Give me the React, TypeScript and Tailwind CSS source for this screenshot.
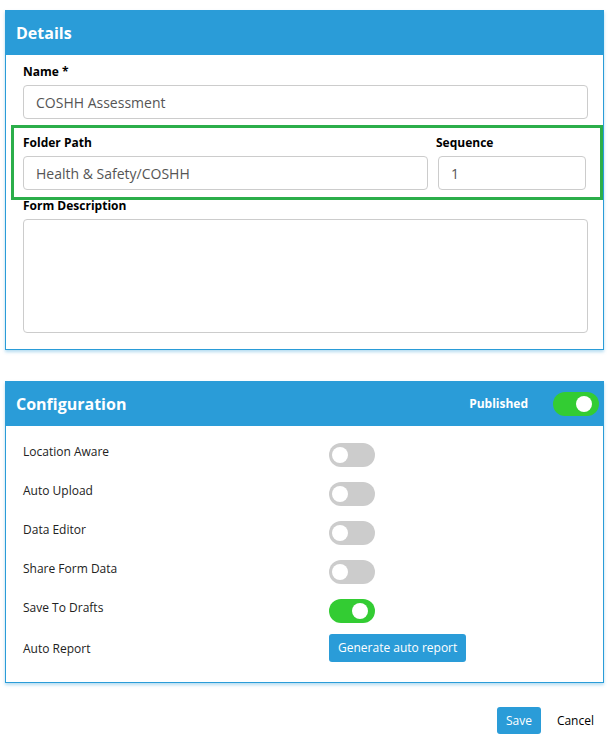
import { useState } from "react";

function Toggle({ on, onChange }: { on: boolean; onChange?: () => void }) {
  return (
    <button
      type="button"
      onClick={onChange}
      className={`relative block w-[46px] h-[24px] rounded-full shrink-0 ${on ? "bg-[#33cc33]" : "bg-[#cccccc]"}`}
    >
      <span
        className={`absolute top-[4px] w-[16px] h-[16px] rounded-full bg-white ${on ? "left-[23px]" : "left-[3px]"}`}
      />
    </button>
  );
}

const inputClass =
  "block w-full h-[34px] px-[12px] border border-[#cccccc] rounded-[4px] text-[14px] text-[#555555] bg-white outline-none";

export default function App() {
  const [published, setPublished] = useState(true);
  const [flags, setFlags] = useState({
    locationAware: false,
    autoUpload: false,
    dataEditor: false,
    shareFormData: false,
    saveToDrafts: true,
  });

  const rows: { key: keyof typeof flags; label: string }[] = [
    { key: "locationAware", label: "Location Aware" },
    { key: "autoUpload", label: "Auto Upload" },
    { key: "dataEditor", label: "Data Editor" },
    { key: "shareFormData", label: "Share Form Data" },
    { key: "saveToDrafts", label: "Save To Drafts" },
  ];

  return (
    <div
      className="w-[610px] min-h-[748px] bg-white pt-[10px] pl-[5px] pr-[6px] text-[#222222]"
      style={{ fontFamily: '"Open Sans", "Noto Sans", sans-serif' }}
    >
      {/* Details */}
      <div className="border border-[#2a9cd8] shadow-[0_2px_3px_rgba(42,156,216,0.35)]">
        <div className="h-[44px] bg-[#2a9cd8] flex items-center pl-[10px]">
          <h2 className="text-[16px] font-bold text-white">Details</h2>
        </div>
        <div className="pt-[8px] pb-[16px] pl-[17px] pr-[15px]">
          <label className="block text-[12px] leading-[17px] font-bold text-black mb-[5px]">Name *</label>
          <input className={inputClass} defaultValue="COSHH Assessment" />

          {/* highlighted row */}
          <div className="mt-[6px] -ml-[12px] -mr-[15px] border-[3px] border-[#2bae4a] pt-[6px] pb-[7px] pl-[9px] pr-[14px] flex gap-[10px]">
            <div className="flex-1">
              <label className="block text-[12px] leading-[17px] font-bold text-black mb-[5px]">Folder Path</label>
              <input className={inputClass} defaultValue="Health & Safety/COSHH" />
            </div>
            <div className="w-[148px]">
              <label className="block text-[12px] leading-[17px] font-bold text-black mb-[5px] -ml-[2px]">Sequence</label>
              <input className={inputClass} defaultValue="1" />
            </div>
          </div>

          <label className="block text-[12px] leading-[17px] font-bold text-black mb-[5px] -mt-[3px]">Form Description</label>
          <textarea className="block w-full h-[114px] px-[12px] py-[6px] border border-[#cccccc] rounded-[4px] text-[14px] text-[#555555] resize-none outline-none" />
        </div>
      </div>

      {/* Configuration */}
      <div className="mt-[31px] border border-[#2a9cd8] shadow-[0_2px_3px_rgba(42,156,216,0.35)]">
        <div className="h-[44px] bg-[#2a9cd8] flex items-center pl-[10px] pr-[4px]">
          <h2 className="text-[16px] font-bold text-white flex-1">Configuration</h2>
          <span className="text-[12px] font-bold text-white mr-[25px]">Published</span>
          <Toggle on={published} onChange={() => setPublished(!published)} />
        </div>
        <div className="pt-[17px] pb-[20px] pl-[17px]">
          {rows.map((r) => (
            <div key={r.key} className="flex items-start mb-[15px]">
              <span className="w-[306px] text-[12px] leading-[17px]">{r.label}</span>
              <Toggle
                on={flags[r.key]}
                onChange={() => setFlags({ ...flags, [r.key]: !flags[r.key] })}
              />
            </div>
          ))}
          <div className="flex items-center -mt-[4px]">
            <span className="w-[306px] text-[12px] leading-[17px]">Auto Report</span>
            <button className="h-[28px] px-[9px] rounded-[3px] bg-[#2a9cd8] text-white text-[12px]">
              Generate auto report
            </button>
          </div>
        </div>
      </div>

      {/* Footer */}
      <div className="flex justify-end items-center mt-[24px] pr-[1px]">
        <button className="h-[27px] w-[44px] rounded-[3px] bg-[#2a9cd8] text-white text-[12px]">Save</button>
        <button className="h-[27px] px-[9px] ml-[7px] text-[12px] text-black">Cancel</button>
      </div>
    </div>
  );
}
